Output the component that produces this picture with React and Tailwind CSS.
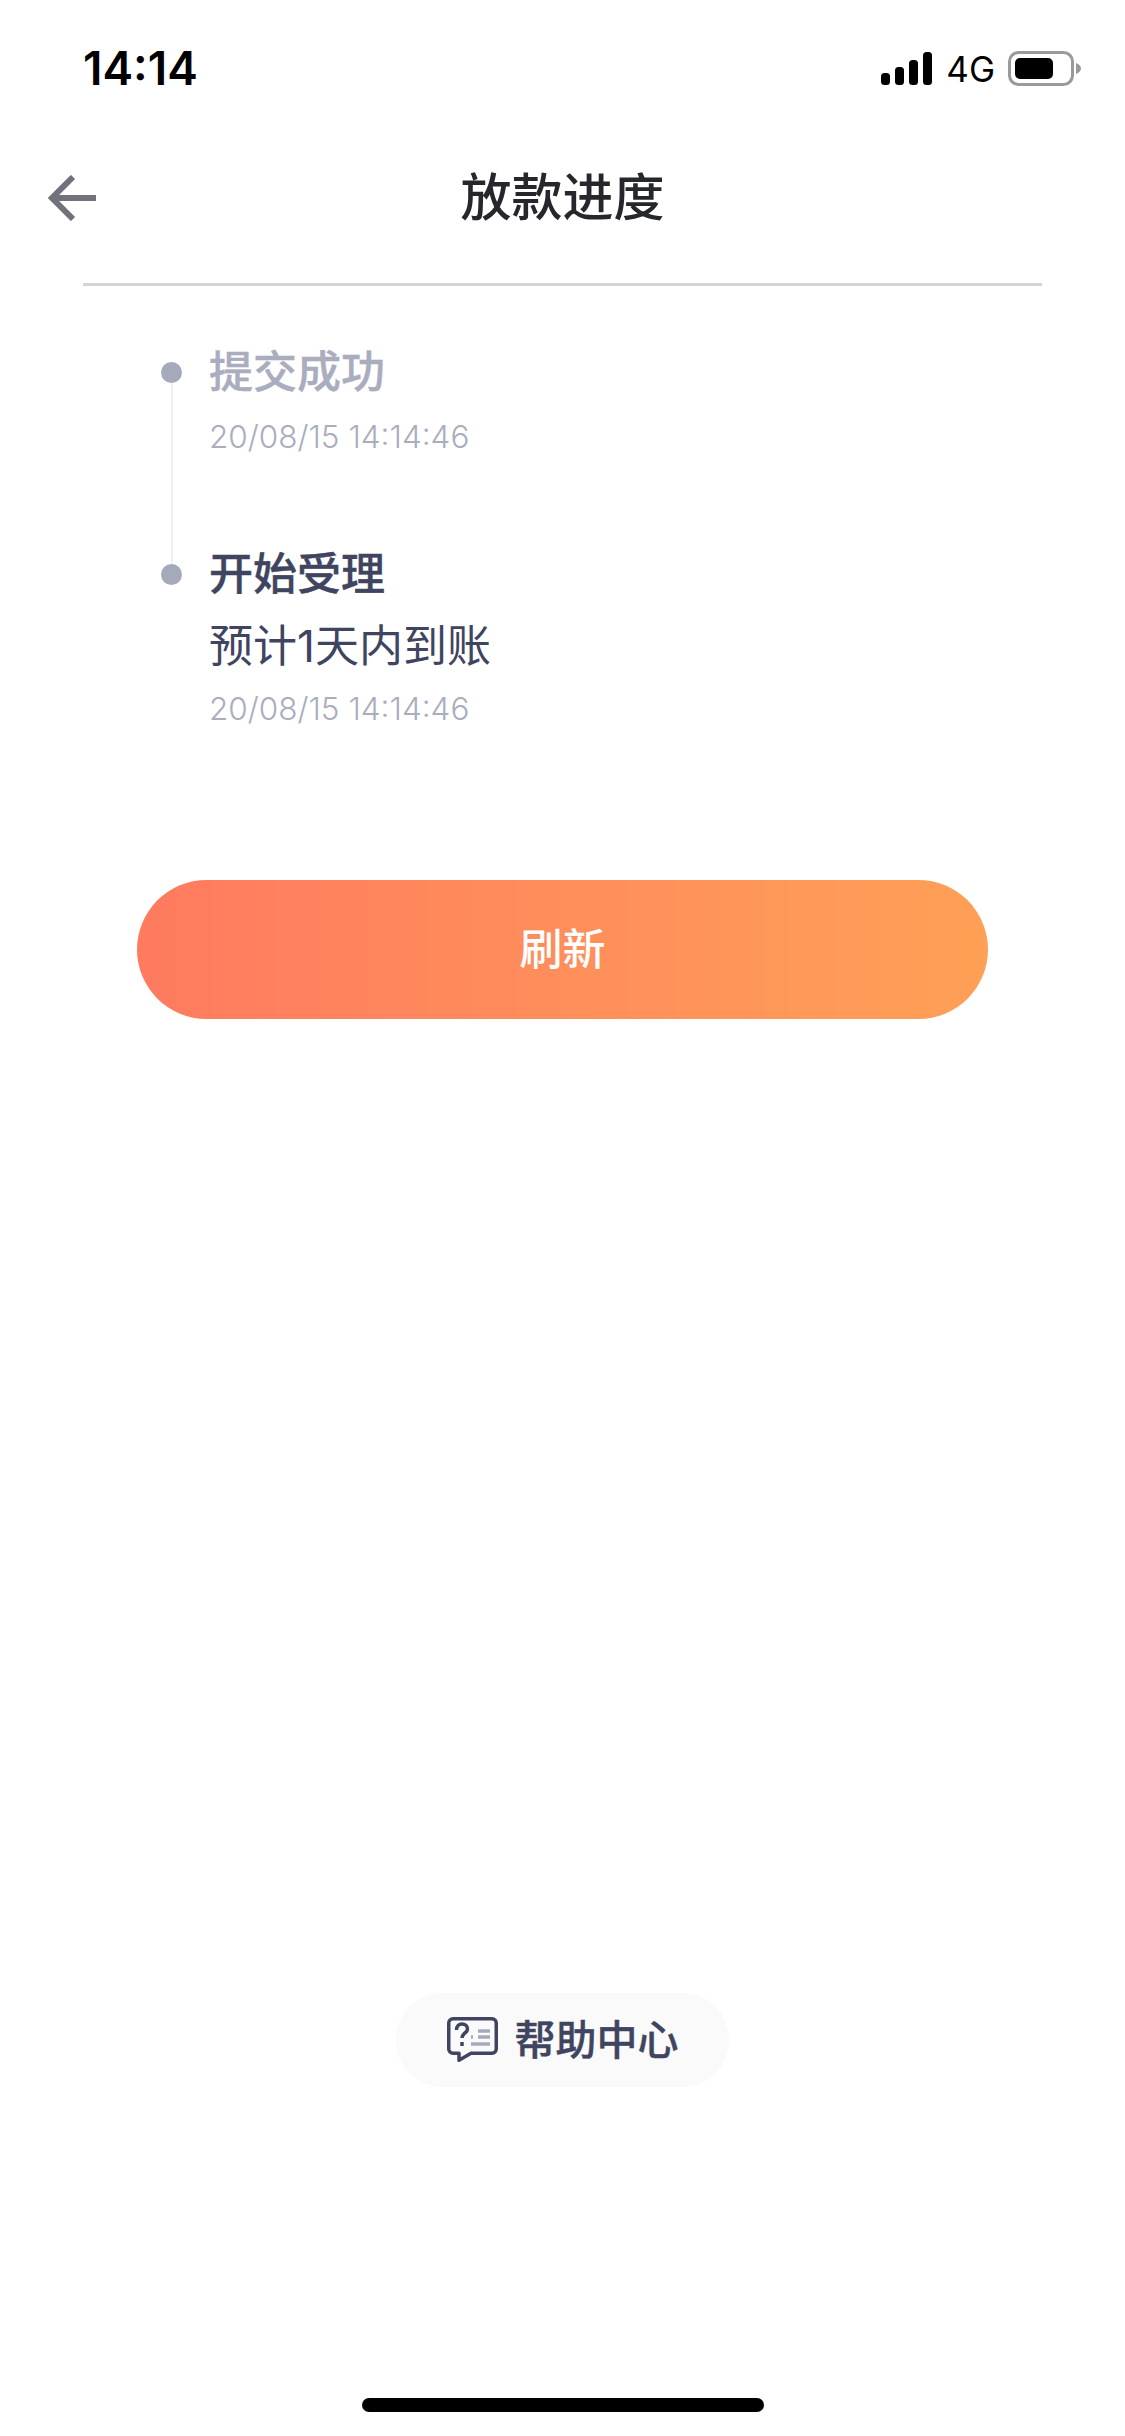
import React from 'react';

const fontStack = "font-['Inter','Noto_Sans_CJK_SC',sans-serif]";

const steps = [
  { title: '提交成功', time: '20/08/15 14:14:46', done: true },
  { title: '开始受理', note: '预计1天内到账', time: '20/08/15 14:14:46' },
];

const StatusBar = () => (
  <div className="flex h-[132px] items-start justify-between pl-[83px] pr-[43px] pt-[46px] text-black">
    <span className="text-[46px] font-semibold leading-[45px]">14:14</span>
    <div className="flex items-center pt-[5px]">
      <svg width="51" height="33" viewBox="0 0 51 33" fill="currentColor">
        <rect x="0" y="21" width="9" height="12" rx="3.5" />
        <rect x="14" y="15" width="9" height="18" rx="3.5" />
        <rect x="28" y="8" width="9" height="25" rx="3.5" />
        <rect x="42" y="0" width="9" height="33" rx="3.5" />
      </svg>
      <span className="ml-[14px] text-[35px] leading-[34px]">4G</span>
      <svg className="ml-[13px]" width="74" height="35" viewBox="0 0 74 35">
        <rect x="1.5" y="1.5" width="63" height="32" rx="9" fill="none" stroke="#9a9a9a" strokeWidth="3" />
        <rect x="7" y="7" width="38" height="21" rx="5" fill="#000" />
        <path d="M68 12c3 1 5 3 5 5.500s-2 4.500-5 5.500z" fill="#9a9a9a" />
      </svg>
    </div>
  </div>
);

const NavBar = () => (
  <div className="grid h-[132px] grid-cols-[1fr_auto_1fr] items-center px-[48px]">
    <svg width="48" height="46" viewBox="0 0 48 46" fill="none" stroke="#71727b" strokeWidth="6">
      <path d="M25 2 4 23l21 21" />
      <path d="M4 23h44" />
    </svg>
    <h1 className="text-[51px] font-medium leading-[60px] text-[#25272d]">放款进度</h1>
  </div>
);

// dot plus the connector running down to the next step
const TimelineRail = ({ last }) => (
  <div className="flex w-[21px] shrink-0 flex-col items-center">
    <div className={`h-[20px] w-[2px] ${last ? 'bg-[#f0f0f4]' : 'bg-transparent'}`} />
    <div className="h-[21px] w-[21px] shrink-0 rounded-full bg-[#a5aaba]" />
    {!last && <div className="w-[2px] flex-1 bg-[#f0f0f4]" />}
  </div>
);

const Timeline = () => (
  <div className="mt-[56px] pl-[161px]">
    {steps.map((step, i) => {
      const last = i === steps.length - 1;
      return (
        <div key={step.title} className="flex gap-[27px]">
          <TimelineRail last={last} />
          <div className={last ? '' : 'pb-[87px]'}>
            <div
              className={`text-[44px] font-medium leading-[60px] [-webkit-text-stroke:0.4px_currentColor] ${
                step.done ? 'text-[#a9adbe]' : 'text-[#3f4560]'
              }`}
            >
              {step.title}
            </div>
            {step.note && (
              <div className="mt-[12px] text-[44px] font-normal leading-[60px] text-[#3f4560]">{step.note}</div>
            )}
            <div className={`${step.note ? 'mt-[13px]' : 'mt-[15px]'} text-[31.500px] font-light leading-[40px] text-[#a9adbe]`}>
              {step.time}
            </div>
          </div>
        </div>
      );
    })}
  </div>
);

const HelpIcon = () => (
  <svg width="51" height="46" viewBox="0 0 51 46" fill="none">
    <path
      d="M6 1.750h39a4.250 4.250 0 0 1 4.250 4.250v26a4.250 4.250 0 0 1-4.250 4.250H24l-12 7v-7H6A4.250 4.250 0 0 1 1.750 32V6A4.250 4.250 0 0 1 6 1.750z"
      stroke="#3f4560"
      strokeWidth="3.5"
      strokeLinejoin="round"
    />
    <path d="M9.500 13c0-4 2.500-6 5.500-6s5.500 2 5.500 5c0 4-5.500 4-5.500 9" stroke="#3f4560" strokeWidth="3.500" />
    <rect x="13.250" y="25" width="3.500" height="4" fill="#3f4560" />
    <path d="M31 14h12M24 20h2M31 20h12M24 27h19" stroke="#a5aaba" strokeWidth="3.500" />
  </svg>
);

export default function App() {
  return (
    <div className={`flex h-[2436px] w-[1125px] flex-col bg-white ${fontStack}`}>
      <StatusBar />
      <NavBar />
      <div className="mx-[83px] mt-[19px] h-[3px] bg-[#d3d4da]" />
      <Timeline />

      <button className="mx-[137px] mt-[151px] flex h-[139px] items-center justify-center rounded-full bg-gradient-to-r from-[#ff7a5f] to-[#ffa056] pb-[2px] text-[43px] font-medium leading-[60px] text-white">
        刷新
      </button>

      <div className="mt-auto flex justify-center">
        <div className="flex h-[94px] w-[333px] items-center justify-center gap-[17px] rounded-full bg-[#fafafb]">
          <HelpIcon />
          <span className="text-[41px] font-medium leading-[60px] text-[#3f4560] [-webkit-text-stroke:0.4px_#3f4560]">帮助中心</span>
        </div>
      </div>

      <div className="mb-[24px] mt-[311px] flex justify-center">
        <div className="h-[14px] w-[402px] rounded-full bg-black" />
      </div>
    </div>
  );
}
